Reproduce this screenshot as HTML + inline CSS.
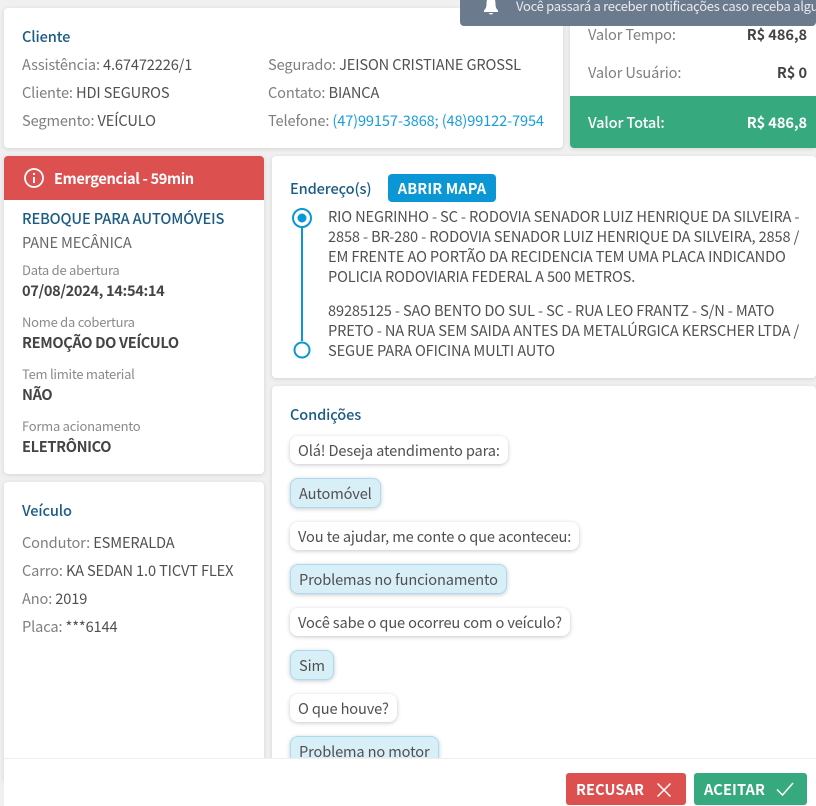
<!DOCTYPE html>
<html><head><meta charset="utf-8"><style>
html,body{margin:0;padding:0}
body{width:816px;height:806px;overflow:hidden;position:relative;background:#f0f0f0;font-family:"Noto Sans CJK SC","Liberation Sans",sans-serif;font-size:14.6px;letter-spacing:-.13px;color:#505050}
.c{position:absolute;background:#fff;border-radius:4px;box-shadow:0 1px 4px rgba(0,0,0,.12)}
.t{position:absolute;white-space:nowrap;line-height:21px}
.g{color:#7f7f7f}.h{color:#1b5c85;font-weight:500}.b{font-weight:700;color:#444;letter-spacing:-.35px}.s{font-size:13px;letter-spacing:-.25px;color:#8a8a8a}
.bub{position:absolute;height:28px;line-height:29px;border-radius:8px;background:#fff;box-shadow:0 1px 4px rgba(0,0,0,.22);white-space:nowrap;box-sizing:border-box;padding:0 8px}
.u{background:#d9eff8;border:1px solid #a9dcf0;line-height:29px;height:30px}
.w{color:#fff}
.k{letter-spacing:.1px}
</style></head><body>
<div class="c" style="left:4px;top:8px;width:559px;height:140px"></div>
<div class="c" style="left:570px;top:8px;width:246px;height:140px"></div>
<div style="position:absolute;left:570px;top:96px;width:246px;height:52px;background:#36a97e;border-radius:0 0 0 4px"></div>
<div style="position:absolute;left:460px;top:-4px;width:356px;height:30px;background:#6c7a8d;border-radius:4px"></div>
<svg style="position:absolute;left:482px;top:0" width="18" height="15" viewBox="0 0 18 15"><path d="M9 -3C5.500 -3 4.500 0 4.500 4C4.500 7 3.500 9 2 10.500L2 12L16 12L16 10.500C14.500 9 13.500 7 13.500 4C13.500 0 12.500 -3 9 -3Z M7 13L11 13C11 15 7 15 7 13Z" fill="#fff"/></svg>
<div class="t w" style="left:516px;top:-5px;color:#e8ebef;font-size:13px;letter-spacing:-.28px">Você passará a receber notificações caso receba algu</div>

<div class="t h" style="left:22px;top:26px">Cliente</div>
<div class="t" style="left:22px;top:54px"><span class="g">Assistência:</span> 4.67472226/1</div>
<div class="t" style="left:22px;top:82px"><span class="g">Cliente:</span> HDI SEGUROS</div>
<div class="t" style="left:22px;top:110px"><span class="g">Segmento:</span> VEÍCULO</div>
<div class="t" style="left:268px;top:54px"><span class="g">Segurado:</span> JEISON CRISTIANE GROSSL</div>
<div class="t" style="left:268px;top:82px"><span class="g">Contato:</span> BIANCA</div>
<div class="t" style="left:268px;top:110px"><span class="g">Telefone:</span> <span style="color:#1a9ddb">(47)99157-3868; (48)99122-7954</span></div>

<div class="t g" style="left:588px;top:24px">Valor Tempo:</div>
<div class="t b" style="right:9px;top:24px;letter-spacing:-.1px">R$ 486,8</div>
<div class="t g" style="left:588px;top:62px">Valor Usuário:</div>
<div class="t b" style="right:9px;top:62px;letter-spacing:-.1px">R$ 0</div>
<div class="t w" style="left:588px;top:112px;font-weight:500">Valor Total:</div>
<div class="t w" style="right:9px;top:112px;font-weight:700;letter-spacing:-.1px">R$ 486,8</div>

<div class="c" style="left:4px;top:156px;width:260px;height:318px"></div>
<div style="position:absolute;left:4px;top:156px;width:260px;height:44px;background:#dc5050;border-radius:4px 4px 0 0"></div>
<svg style="position:absolute;left:23px;top:167px" width="22" height="22" viewBox="0 0 22 22" fill="none" stroke="#fff"><circle cx="11" cy="11" r="9" stroke-width="1.800"/><path d="M11 10V16" stroke-width="2"/><path d="M11 6V8" stroke-width="2"/></svg>
<div class="t w" style="left:54px;top:168px;font-weight:700;letter-spacing:-.35px">Emergencial - 59min</div>
<div class="t h" style="left:22px;top:208px">REBOQUE PARA AUTOMÓVEIS</div>
<div class="t" style="left:22px;top:232px;color:#666">PANE MECÂNICA</div>
<div class="t s" style="left:22px;top:259px">Data de abertura</div>
<div class="t b" style="left:22px;top:280px">07/08/2024, 14:54:14</div>
<div class="t s" style="left:22px;top:311px">Nome da cobertura</div>
<div class="t b" style="left:22px;top:332px">REMOÇÃO DO VEÍCULO</div>
<div class="t s" style="left:22px;top:363px">Tem limite material</div>
<div class="t b" style="left:22px;top:384px">NÃO</div>
<div class="t s" style="left:22px;top:415px">Forma acionamento</div>
<div class="t b" style="left:22px;top:436px">ELETRÔNICO</div>

<div class="c" style="left:4px;top:482px;width:260px;height:300px"></div>
<div class="t h" style="left:22px;top:500px">Veículo</div>
<div class="t" style="left:22px;top:532px"><span class="g">Condutor:</span> ESMERALDA</div>
<div class="t" style="left:22px;top:560px"><span class="g">Carro:</span> KA SEDAN 1.0 TICVT FLEX</div>
<div class="t" style="left:22px;top:588px"><span class="g">Ano:</span> 2019</div>
<div class="t" style="left:22px;top:616px"><span class="g">Placa:</span> ***6144</div>

<div class="c" style="left:272px;top:156px;width:544px;height:222px"></div>
<div class="t h" style="left:290px;top:178px">Endereço(s)</div>
<div class="k" style="position:absolute;left:388px;top:174px;width:108px;height:28px;background:#0b97d6;border-radius:4px;color:#fff;font-weight:700;text-align:center;line-height:29px">ABRIR MAPA</div>
<svg style="position:absolute;left:290px;top:205px" width="26" height="156" viewBox="0 0 26 156" fill="none" stroke="#0b97d6"><path d="M12 22V136" stroke-width="2"/><circle cx="12" cy="13" r="9" stroke-width="2"/><circle cx="12" cy="13" r="4.500" fill="#0b97d6" stroke="none"/><circle cx="12" cy="145" r="7.500" stroke-width="2"/></svg>
<div class="t" style="left:328px;top:206px">RIO NEGRINHO - SC - RODOVIA SENADOR LUIZ HENRIQUE DA SILVEIRA -</div>
<div class="t" style="left:328px;top:226px">2858 - BR-280 - RODOVIA SENADOR LUIZ HENRIQUE DA SILVEIRA, 2858 /</div>
<div class="t" style="left:328px;top:246px">EM FRENTE AO PORTÃO DA RECIDENCIA TEM UMA PLACA INDICANDO</div>
<div class="t" style="left:328px;top:266px">POLICIA RODOVIARIA FEDERAL A 500 METROS.</div>
<div class="t" style="left:328px;top:300px">89285125 - SAO BENTO DO SUL - SC - RUA LEO FRANTZ - S/N - MATO</div>
<div class="t" style="left:328px;top:320px">PRETO - NA RUA SEM SAIDA ANTES DA METALÚRGICA KERSCHER LTDA /</div>
<div class="t" style="left:328px;top:340px">SEGUE PARA OFICINA MULTI AUTO</div>

<div class="c" style="left:272px;top:386px;width:544px;height:400px"></div>
<div class="t h" style="left:290px;top:404px">Condições</div>
<div class="bub" style="left:290px;top:436px">Olá! Deseja atendimento para:</div>
<div class="bub u" style="left:290px;top:478px">Automóvel</div>
<div class="bub" style="left:290px;top:522px">Vou te ajudar, me conte o que aconteceu:</div>
<div class="bub u" style="left:290px;top:564px">Problemas no funcionamento</div>
<div class="bub" style="left:290px;top:608px">Você sabe o que ocorreu com o veículo?</div>
<div class="bub u" style="left:290px;top:650px">Sim</div>
<div class="bub" style="left:290px;top:694px">O que houve?</div>
<div class="bub u" style="left:290px;top:736px">Problema no motor</div>

<div style="position:absolute;left:4px;top:758px;width:812px;height:48px;background:#fff;border-top:1px solid #eee;box-sizing:border-box"></div>
<div style="position:absolute;left:566px;top:773px;width:120px;height:32px;background:#dc5050;border-radius:3px"></div>
<div class="t w k" style="left:576px;top:779px;font-weight:700">RECUSAR</div>
<svg style="position:absolute;left:656px;top:782px" width="16" height="16" viewBox="0 0 16 16" stroke="#fff" stroke-width="1.500" fill="none"><path d="M1.500 1.500L14.500 14.500M14.500 1.500L1.500 14.500"/></svg>
<div style="position:absolute;left:694px;top:773px;width:113px;height:32px;background:#36a97e;border-radius:3px"></div>
<div class="t w k" style="left:704px;top:779px;font-weight:700">ACEITAR</div>
<svg style="position:absolute;left:776px;top:781px" width="18" height="16" viewBox="0 0 18 16" stroke="#fff" stroke-width="1.500" fill="none"><path d="M1 8.500L6.500 14L17 2"/></svg>
</body></html>
